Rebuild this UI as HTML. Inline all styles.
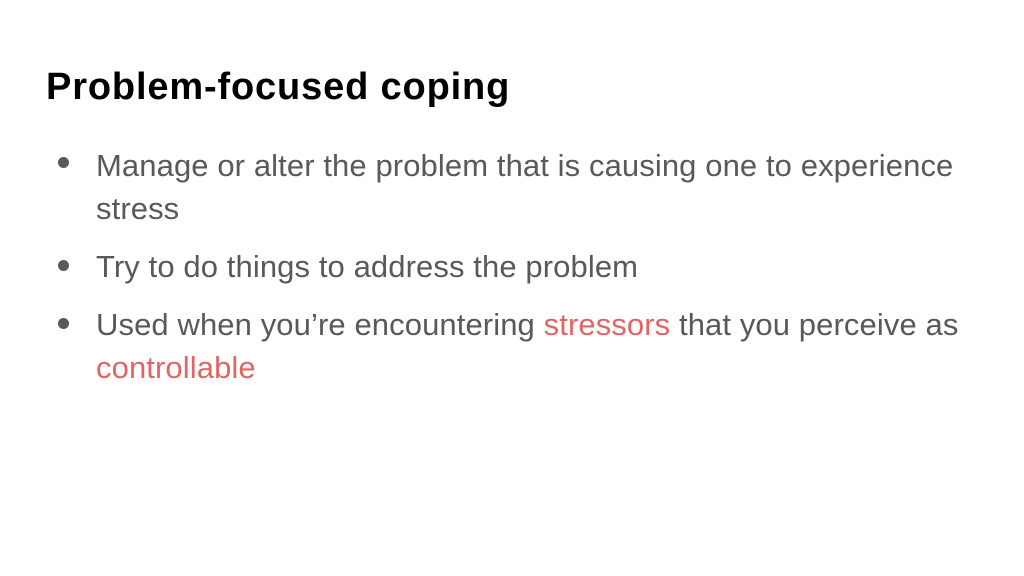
<!DOCTYPE html>
<html><head><style>
body{margin:0;width:1024px;height:576px;background:#fff;position:relative;overflow:hidden;font-family:"Liberation Sans",Arial,sans-serif}
.t{position:absolute;left:46px;top:68px;font-size:38px;line-height:1;font-weight:bold;color:#000;white-space:nowrap;letter-spacing:0.85px}
.l{position:absolute;left:96px;font-size:31px;line-height:1;color:#595959;white-space:nowrap;letter-spacing:0.1px}
.b{position:absolute;left:58px;width:11px;height:11px;border-radius:50%;background:#595959}
.r{color:#e06666}
</style></head><body>
<div class="t">Problem-focused coping</div>
<div class="b" style="top:157px"></div>
<div class="l" style="top:150px">Manage or alter the problem that is causing one to experience</div>
<div class="l" style="top:193px">stress</div>
<div class="b" style="top:260px"></div>
<div class="l" style="top:251px">Try to do things to address the problem</div>
<div class="b" style="top:318px"></div>
<div class="l" style="top:309px">Used when you’re encountering <span class="r">stressors</span> that you perceive as</div>
<div class="l r" style="top:352px">controllable</div>
</body></html>
